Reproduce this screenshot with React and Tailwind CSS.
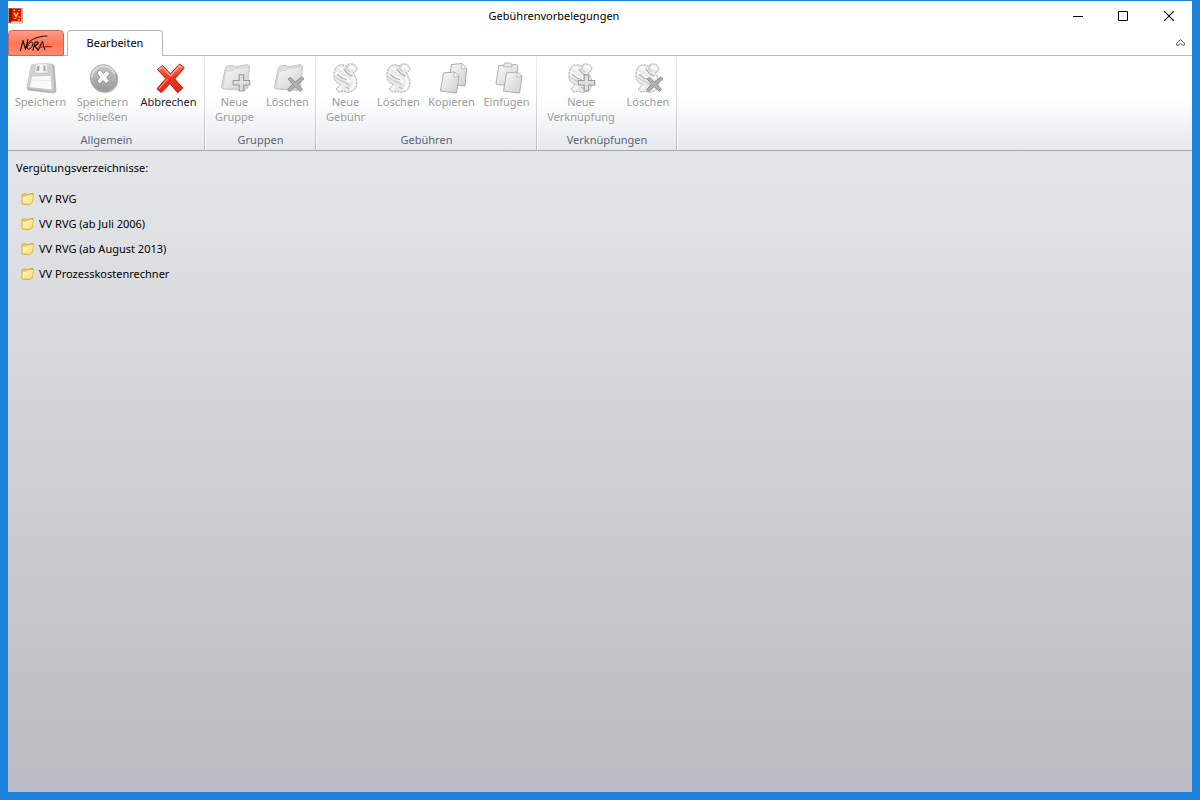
import React from "react";

const GRADIENTS = (
  <svg width="0" height="0" className="absolute" aria-hidden="true">
    <defs>
      <linearGradient id="grey" x1="0" y1="0" x2="1" y2="1">
        <stop offset="0" stopColor="#fbfbfb" />
        <stop offset="1" stopColor="#cecece" />
      </linearGradient>
      <linearGradient id="steel" x1="0" y1="0" x2="0" y2="1">
        <stop offset="0" stopColor="#cccccc" />
        <stop offset="1" stopColor="#989898" />
      </linearGradient>
      <linearGradient id="red" x1="0" y1="0" x2="0" y2="1">
        <stop offset="0" stopColor="#ff7a5c" />
        <stop offset="0.5" stopColor="#f0341c" />
        <stop offset="1" stopColor="#e02818" />
      </linearGradient>
      <linearGradient id="yellow" x1="0" y1="0" x2="1" y2="1">
        <stop offset="0" stopColor="#fffbc4" />
        <stop offset="1" stopColor="#fbdc6a" />
      </linearGradient>
    </defs>
  </svg>
);

function Icon({ children }) {
  return (
    <svg viewBox="-1 -1 32 32" className="size-8 shrink-0" aria-hidden="true">
      {children}
    </svg>
  );
}

function SaveIcon() {
  return (
    <Icon>
      <path d="M5.5 2 L26 1 L28 2.5 L30 28.5 L28 30 L2 27 L1 24.5 Z" fill="#b8b8b8" stroke="#ababab" strokeWidth="0.8" />
      <path d="M5.5 2 L26 1 L28 28 L1 24.5 Z" fill="#d0d0d0" />
      <path d="M9.5 1 L21.5 0.5 L21.8 10 L8.5 10.3 Z" fill="#f3f3f3" stroke="#c2c2c2" strokeWidth="0.7" />
      <path d="M11 3 H13.5 L13 8 H10.5 Z M17.5 2.5 H19.5 L19.7 8 H17.5 Z" fill="#a3a3a3" />
      <path d="M5.5 13 L25 12.5 L26.2 27 L3.5 24.5 Z" fill="#fafafa" stroke="#c2c2c2" strokeWidth="0.7" />
      <path d="M5.5 17 L24.8 17.3" stroke="#e8e8e8" />
    </Icon>
  );
}

function CloseDiscIcon() {
  return (
    <Icon>
      <ellipse cx="16.8" cy="16.6" rx="13.4" ry="13.2" fill="#aaaaaa" />
      <circle cx="15.4" cy="14.8" r="13.2" fill="url(#steel)" stroke="#a2a2a2" strokeWidth="0.8" />
      <path d="M4 14.6 A11.6 11.6 0 0 1 26.6 11" fill="none" stroke="#e0e0e0" strokeWidth="1.6" />
      <path d="M9.8 8 L12.8 7.5 L15.5 10.5 L18.8 7.5 L21.8 10.5 L18.8 14.2 L21.3 18 L18.3 20.5 L15.1 17.5 L11.8 20.7 L9 18 L12 14.3 L9.3 10.8 Z" fill="#fdfdfd" stroke="#8c8c8c" strokeWidth="0.8" />
    </Icon>
  );
}

function CancelIcon() {
  return (
    <Icon>
      <g transform="translate(1 0)">
        <path d="M3 7.5 L8.5 3 L16 11.5 L25 2 L30 5.5 L20.5 16.3 L28.5 25.5 L23 30.5 L15 21 L7 30 L2.5 26.5 L11.5 16 Z" fill="#8b3a34" opacity="0.55" />
        <path d="M2.5 6.5 L7.5 2.5 L15.5 11 L24.5 1 L29 4.5 L19.5 15.8 L27.5 25 L22.5 29.5 L15 20.5 L6 29.5 L2 25.8 L10.8 15.6 Z" fill="url(#red)" stroke="#bd1c10" strokeWidth="1" strokeLinejoin="round" />
        <path d="M3.8 6.8 L7.3 4 L15.5 12.8 L24.6 2.8 L27.4 4.8" fill="none" stroke="#ffb9a6" strokeWidth="1.2" />
        <path d="M4 25.8 L12.5 15.8" stroke="#ff8d74" strokeWidth="1.2" />
      </g>
    </Icon>
  );
}

function Plus() {
  return (
    <path d="M18.2 11.7 H22.7 V17.5 H28.7 V22 H22.7 V28 H18.2 V22 H12.3 V17.5 H18.2 Z" fill="#dfdfdf" stroke="#999999" strokeWidth="1.1" />
  );
}

function Cross() {
  return (
    <path d="M14.2 15.8 L16.6 14.4 L21.2 19 L27.6 14 L30 15.8 L23.8 21.2 L28.6 26.4 L26.3 28.6 L21.1 23.6 L15.8 28.6 L13.6 26.8 L18.5 21.2 Z" fill="#b2b2b2" stroke="#868686" strokeWidth="0.9" />
  );
}

function FolderShape() {
  return (
    <g>
      <path d="M4.5 4.5 L6.5 3 L12 2.5 L14 4 L27 1.5 L28.5 3.5 L26.5 25 L24 27.5 L1.5 26 L0.5 23.5 Z" fill="#e0e0e0" stroke="#c0c0c0" strokeWidth="0.9" />
      <path d="M5 8 L12 7.5 L14 5.5 L28 3.8 L26 24 L23.5 26.5 L1.5 25.5 Z" fill="url(#grey)" stroke="#cccccc" strokeWidth="0.8" />
    </g>
  );
}

function FolderAddIcon() {
  return (
    <Icon>
      <g transform="translate(1 0)">
        <FolderShape />
        <Plus />
      </g>
    </Icon>
  );
}

function FolderDeleteIcon() {
  return (
    <Icon>
      <g transform="translate(1 0)">
        <FolderShape />
        <Cross />
      </g>
    </Icon>
  );
}

function SectionSign() {
  return (
    <g strokeLinecap="round" strokeLinejoin="round">
      <path
        d="M5 4.5 C7 1 13 1.5 15 3 C17 0 23.5 0 25.5 4 C27 7 24.5 9 22.5 9.5 C23 12 25 13.5 25.5 17 C27 22 24.5 27.5 20 28.5 C17 30.5 13.5 28.5 12 28 C9 30.5 5.5 28.5 5.5 25.5 C7 24 8.5 23.5 9 21.5 C5 19.5 2.5 17 3 13.5 C2.5 10 3.5 7 5 4.5 Z"
        fill="#eaeaea"
        stroke="#aaaaaa"
        strokeWidth="1"
        strokeDasharray="1.6 1.8"
      />
      <g fill="none">
        <path d="M8 5 C11 4 12 8 15 9.5 M19 4.5 C20 3.5 22 3.5 23 5.5 M6 10 C9 14.5 15 14 18.5 18 M22 15 C24.5 19 23.5 24 20 26 M8 26 L10 24.5" stroke="#fafafa" strokeWidth="2.8" />
        <path d="M17.5 2.8 C14.5 4.5 15 7 18.5 8.5 M5 14.5 C8 18.5 16 18 18 23" stroke="#c9c9c9" strokeWidth="1.2" />
        <path d="M13 6.5 L16.5 10.5 L21 13 M6.5 11.5 L11 15 L15.5 16.5 M15.5 24.5 L18 25.5" stroke="#b0b0b0" strokeWidth="1.2" />
      </g>
    </g>
  );
}

function FeeIcon() {
  return (
    <Icon>
      <SectionSign />
    </Icon>
  );
}

function LinkAddIcon() {
  return (
    <Icon>
      <SectionSign />
      <Plus />
    </Icon>
  );
}

function LinkDeleteIcon() {
  return (
    <Icon>
      <SectionSign />
      <Cross />
    </Icon>
  );
}

function Sheet() {
  return (
    <g>
      <path d="M5.5 10 L16.5 9 L21 13.5 L18.5 30 L2.5 28 Z" fill="url(#grey)" stroke="#ababab" strokeWidth="1" strokeLinejoin="round" />
      <path d="M16.5 9 L15.8 14 L21 13.5 Z" fill="#fafafa" stroke="#b2b2b2" strokeWidth="0.8" strokeLinejoin="round" />
    </g>
  );
}

function CopyIcon() {
  return (
    <Icon>
      <g transform="translate(1 0)">
        <path d="M13.5 1.5 L24 0.5 L28.5 5.5 L27 23 L10.5 21 Z" fill="url(#grey)" stroke="#ababab" strokeWidth="1" strokeLinejoin="round" />
        <path d="M24 0.5 L23.5 6 L28.5 5.5 Z" fill="#fafafa" stroke="#b2b2b2" strokeWidth="0.8" strokeLinejoin="round" />
        <Sheet />
      </g>
    </Icon>
  );
}

function PasteIcon() {
  return (
    <Icon>
      <path d="M7 2.5 L24.5 1.5 L26 3 L24 23 L4.5 21.5 L4 20 Z" fill="url(#grey)" stroke="#b0b0b0" strokeWidth="1" strokeLinejoin="round" />
      <path d="M12.5 0 H19 L20 3.8 H11.5 Z" fill="#eaeaea" stroke="#b8b8b8" strokeWidth="0.9" />
      <g transform="translate(9 0)">
        <Sheet />
      </g>
    </Icon>
  );
}

function TreeFolderIcon() {
  return (
    <svg viewBox="0 0 14 14" className="size-3.5 shrink-0" aria-hidden="true">
      <path d="M1 3.2 L1.6 2 L4.8 1.8 L6 2.6 L12 1.2 L12.3 2.6 L10.8 11 L8.8 12.4 L1 12 Z" fill="#f6cf4c" stroke="#c9a236" strokeWidth="0.8" strokeLinejoin="round" />
      <path d="M1.2 4.4 L5.4 4 L6.8 2.9 L12.8 2.4 L11.2 10.6 L9 12.2 L1.2 11.8 Z" fill="url(#yellow)" stroke="#dcb343" strokeWidth="0.7" strokeLinejoin="round" />
    </svg>
  );
}

function AppIcon() {
  return (
    <svg viewBox="0 0 16 16" className="size-4 shrink-0" aria-hidden="true">
      <path d="M0 0 H15 V15.5 H0 Z" fill="#b9ac9c" />
      <path d="M0.8 0.5 H2.4 V13.5 L3.2 15.2 L0.8 14.5 Z" fill="#6e2a1a" />
      <path d="M2 0.5 H13 V13.5 H2 Z" fill="#d81408" />
      <path d="M2 0.5 H3.8 V13.5 H2 Z" fill="#8e0c06" />
      <path d="M3 14.2 H13.5" stroke="#f0e6cc" strokeWidth="1" />
      <path d="M6 4.5 L8 8.5 L10 4.5" fill="none" stroke="#ffd426" strokeWidth="1.5" />
      <path d="M5.3 2.3 H7 M10.5 2.5 H12 M10.5 8.5 L12.5 10 M6 10.5 H8 M10 11.8 H12" stroke="#ffb31c" strokeWidth="1.2" />
    </svg>
  );
}

function NoraLogo() {
  return (
    <svg viewBox="0 0 54 24" className="h-6 w-[54px]" fill="none" strokeLinecap="round" strokeLinejoin="round" aria-hidden="true">
      <path d="M11.5 19.5 L14 9.5 L16.5 18.5 L19 8.5" stroke="#141010" strokeWidth="1.1" />
      <path d="M38 5 C30 5 21 8 17.8 14 C17 18.8 21 19.5 23 15.5 C24.5 12 23.5 10.5 21.5 11.5 C20 12.5 18.5 14.5 18.2 16.5" stroke="#141010" strokeWidth="1" />
      <path d="M24 19 L26 11.5 C30 9.5 30.5 13 25.5 14.8 L29 18.5" stroke="#141010" strokeWidth="1.1" />
      <path d="M29 19.5 C31 16 32 12.5 33.5 10.5 C34.2 13 34.5 16 35.8 18.5" stroke="#141010" strokeWidth="1.1" />
      <path d="M30 16.2 L36 15.6 L42.5 15.6" stroke="#e01010" strokeWidth="1.2" />
    </svg>
  );
}

const GROUPS = [
  {
    title: "Allgemein",
    width: "w-[197px]",
    items: [
      { lines: ["Speichern"], icon: SaveIcon, width: "w-[62px]", disabled: true },
      { lines: ["Speichern", "Schließen"], icon: CloseDiscIcon, width: "w-[62px]", disabled: true },
      { lines: ["Abbrechen"], icon: CancelIcon, width: "w-[70px]", disabled: false },
    ],
  },
  {
    title: "Gruppen",
    width: "w-[111px]",
    items: [
      { lines: ["Neue", "Gruppe"], icon: FolderAddIcon, width: "w-[54px]", disabled: true },
      { lines: ["Löschen"], icon: FolderDeleteIcon, width: "w-[52px]", disabled: true },
    ],
  },
  {
    title: "Gebühren",
    width: "w-[221px]",
    items: [
      { lines: ["Neue", "Gebühr"], icon: FeeIcon, width: "w-[54px]", disabled: true },
      { lines: ["Löschen"], icon: FeeIcon, width: "w-[52px]", disabled: true },
      { lines: ["Kopieren"], icon: CopyIcon, width: "w-[54px]", disabled: true },
      { lines: ["Einfügen"], icon: PasteIcon, width: "w-[56px]", disabled: true },
    ],
  },
  {
    title: "Verknüpfungen",
    width: "w-[140px]",
    items: [
      { lines: ["Neue", "Verknüpfung"], icon: LinkAddIcon, width: "w-[82px]", disabled: true },
      { lines: ["Löschen"], icon: LinkDeleteIcon, width: "w-[52px]", disabled: true },
    ],
  },
];

function RibbonButton({ item }) {
  const Glyph = item.icon;
  return (
    <button
      type="button"
      disabled={item.disabled}
      className={`flex shrink-0 flex-col items-center whitespace-nowrap text-[#1e1e1e] disabled:text-[#9b9b9b] ${item.width}`}
    >
      <Glyph />
      {item.lines.map((line) => (
        <span key={line} className="block">{line}</span>
      ))}
    </button>
  );
}

function RibbonGroup({ group }) {
  return (
    <section aria-label={group.title} className={`flex shrink-0 ${group.width}`}>
      <div className="flex flex-1 flex-col pl-px">
        <div className="flex flex-1 items-start justify-center pt-1.5">
          {group.items.map((item) => (
            <RibbonButton key={item.lines.join(" ")} item={item} />
          ))}
        </div>
        <h2 className="pb-[3px] text-center text-[#5b6478]">{group.title}</h2>
      </div>
      <div className="w-px bg-linear-to-b from-[#f0f1f3] via-[#d5d8dd] to-[#b9bdc6] shadow-[1px_0_0_#ffffff]" />
    </section>
  );
}

const DIRECTORIES = ["VV RVG", "VV RVG (ab Juli 2006)", "VV RVG (ab August 2013)", "VV Prozesskostenrechner"];

export default function App() {
  return (
    <div className="flex min-h-screen flex-col bg-[#1a83d9] px-2 pt-px pb-2 font-['Noto_Sans','Open_Sans',sans-serif] text-[11px] leading-[15px] text-black">
      {GRADIENTS}
      <header className="flex h-[29px] items-center bg-white">
        <AppIcon />
        <h1 className="flex-1 pl-7 text-center">Gebührenvorbelegungen</h1>
        <div className="flex justify-end">
          <button type="button" aria-label="Minimieren" className="flex h-7 w-11 items-center justify-center">
            <svg viewBox="0 0 10 10" className="size-2.5" aria-hidden="true"><path d="M0 5.5 H10" stroke="#000" /></svg>
          </button>
          <button type="button" aria-label="Maximieren" className="flex h-7 w-[46px] items-center justify-center">
            <svg viewBox="0 0 10 10" className="size-2.5" aria-hidden="true"><path d="M0.5 0.5 H9.5 V9.5 H0.5 Z" fill="none" stroke="#000" /></svg>
          </button>
          <button type="button" aria-label="Schließen" className="flex h-7 w-[46px] items-center justify-center">
            <svg viewBox="0 0 10 10" className="size-2.5" aria-hidden="true"><path d="M0 0 L10 10 M10 0 L0 10" stroke="#000" strokeWidth="1.1" /></svg>
          </button>
        </div>
      </header>

      <nav className="flex h-[26px] items-stretch bg-white">
        <button type="button" aria-label="Nora" className="flex w-14 items-center justify-center rounded-t-sm border border-[#c9675a] bg-linear-to-b from-[#ff9c86] via-[#ff7758] to-[#ff8a70]">
          <NoraLogo />
        </button>
        <div className="w-[3px] border-b border-[#b4b7bd]" />
        <button type="button" aria-current="page" className="w-24 rounded-t-sm border border-b-0 border-[#b4b7bd] bg-white pb-0.5">
          Bearbeiten
        </button>
        <div className="flex flex-1 items-center justify-end border-b border-[#b4b7bd] pr-[7px]">
          <button type="button" aria-label="Menüband minimieren">
            <svg viewBox="0 0 9 7" className="h-[7px] w-[9px]" fill="none" stroke="#505860" strokeLinejoin="round" aria-hidden="true">
              <path d="M4.5 0.6 L8.4 4.2 V6.2 H6.5 L4.5 4.4 L2.5 6.2 H0.6 V4.2 Z" />
            </svg>
          </button>
        </div>
      </nav>

      <div className="flex h-[95px] border-b border-[#a2a5aa] bg-linear-to-b from-white from-45% to-[#e4e8ed]">
        {GROUPS.map((group) => (
          <RibbonGroup key={group.title} group={group} />
        ))}
      </div>

      <main className="flex-1 bg-linear-to-b from-[#e5e6ea] via-[#cfd3d6] via-45% to-[#b8bbc1] px-2 pt-[9px]">
        <h2>Vergütungsverzeichnisse:</h2>
        <ul className="mt-[11px] px-[5px]">
          {DIRECTORIES.map((name) => (
            <li key={name}>
              <button type="button" className="flex h-[25px] items-center gap-1">
                <TreeFolderIcon />
                {name}
              </button>
            </li>
          ))}
        </ul>
      </main>
    </div>
  );
}
